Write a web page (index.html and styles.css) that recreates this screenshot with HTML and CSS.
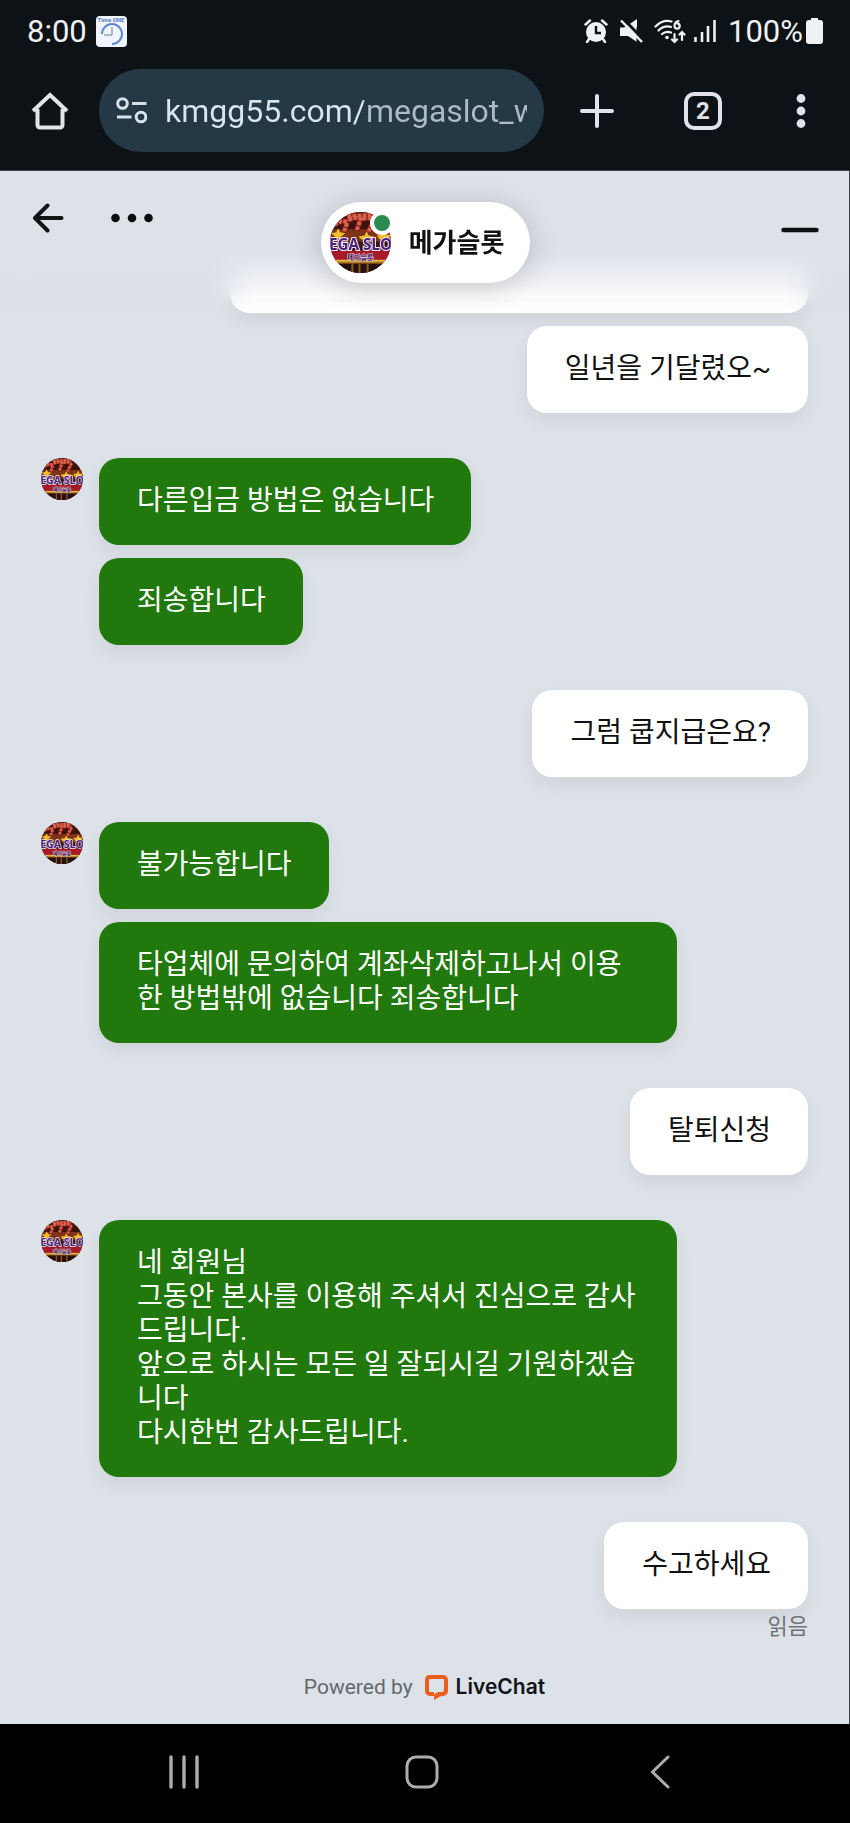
FILE: index.html
```
<!DOCTYPE html>
<html lang="ko">
<head>
    <meta charset="UTF-8">
    <meta name="viewport" content="width=device-width, initial-scale=1.0">
    <title>메가슬롯</title>
    <link rel="stylesheet" href="styles.css">
</head>
<body>

<!-- Shared agent picture -->
<svg class="defs" aria-hidden="true">
    <defs>
        <linearGradient id="gold" x1="0" y1="0" x2="0" y2="1">
            <stop offset="0" stop-color="#f6d24a"/>
            <stop offset="1" stop-color="#8a4a10"/>
        </linearGradient>
        <clipPath id="round"><circle cx="30" cy="30" r="30"/></clipPath>
    </defs>
    <symbol id="agent" viewBox="0 0 60 60">
        <g clip-path="url(#round)">
            <rect width="60" height="60" fill="#3a1410"/>
            <path d="M0 17h60v12H0z" fill="#7d3418"/>
            <path d="M4 13q7-6 13-3l-3 9M18 8q7-4 12-1l-4 12M32 7q8-3 11 2l-5 10M17 4l26-1" fill="none" stroke="#6b150d" stroke-width="6"/>
            <path d="M4 13q7-6 13-3l-3 9M18 8q7-4 12-1l-4 12M32 7q8-3 11 2l-5 10M17 4l26-1" fill="none" stroke="#d9604c" stroke-width="4" stroke-dasharray="4 1"/>
            <path d="M8 16l2 4 5 1-4 3 1 4-4-2-4 2 1-4-4-3 5-1zM36 19l2 4 5 1-4 3H31l-3-3 6-1zM53 18l2 4 5 1-4 4H49l-3-4 5-1z" fill="#f0bc2b"/>
            <rect y="38" width="60" height="10" fill="#a71929"/>
            <rect y="47" width="60" height="4" fill="url(#gold)"/>
            <rect y="51" width="60" height="9" fill="#24110f"/>
            <path d="M22 51v9M29 51v9M37 51v9" stroke="#8f541f" stroke-width="2"/>
            <text class="logo-title" x="30" y="37" text-anchor="middle">EGA SLO</text>
            <text class="logo-sub" x="30" y="47" text-anchor="middle">메가슬롯</text>
        </g>
    </symbol>
</svg>

<div class="status-bar">
    <div class="status-left">
        <span>8:00</span>
        <svg width="31" height="31" viewBox="0 0 31 31" aria-hidden="true">
            <rect width="31" height="31" rx="4" fill="#f0f4fb"/>
            <text class="app-label" x="15" y="6" text-anchor="middle">Time ONE</text>
            <path d="M6 18a10 10 0 1 1 10 10" fill="none" stroke="#6288d2" stroke-width="2"/>
            <path d="M16 11v8H8" fill="none" stroke="#777f8c" stroke-width="1"/>
        </svg>
    </div>
    <div class="status-right">
        <svg width="24" height="24" viewBox="0 0 24 24" aria-hidden="true">
            <path d="M1.500 5.500L6 1.500M22.500 5.500L18 1.500M5 20l-2 3M19 20l2 3" stroke="#f0f1f3" stroke-width="2.500" stroke-linecap="round"/>
            <circle cx="12" cy="13" r="10" fill="#f0f1f3"/>
            <path d="M12 7v7h5" fill="none" stroke="#0d1217" stroke-width="2.400"/>
        </svg>
        <svg width="24" height="24" viewBox="0 0 24 24" aria-hidden="true">
            <path d="M1 8.500h4l5-3 8-5.500v23l-9-6H1z" fill="#f0f1f3"/>
            <path d="M4.500 0l21 22" stroke="#0d1217" stroke-width="3"/>
            <path d="M19 8v15" stroke="#0d1217" stroke-width="3"/>
            <path d="M2 1.500l21 21.500" stroke="#f0f1f3" stroke-width="2.500"/>
        </svg>
        <svg class="wifi" width="32" height="25" viewBox="0 0 32 25" aria-hidden="true">
            <g fill="none" stroke="#f0f1f3" stroke-width="2.200" stroke-linecap="round">
                <path d="M1.500 7.500Q9 0 17.500 2.500M4.500 11.500Q10 6 17 8M8 15q4-3.500 9-1.500"/>
                <path d="M24.500 2q-4 1-4 5a2.600 2.600 0 1 0 2.600-2.600"/>
                <path d="M20.500 15v8M18 20.500l2.500 2.500 2.500-2.500M28 21v-8M25.500 15.500L28 13l2.500 2.500"/>
            </g>
            <circle cx="13" cy="18.500" r="1.800" fill="#f0f1f3"/>
        </svg>
        <svg width="22" height="24" viewBox="0 0 22 24" aria-hidden="true">
            <path d="M1.500 18v5M8 13v10M14 7v16M20.500 1v22" stroke="#f0f1f3" stroke-width="2.600"/>
        </svg>
        <span class="percent">100%</span>
        <svg width="17" height="26" viewBox="0 0 17 26" aria-hidden="true">
            <path d="M5 0h7v2h2a3 3 0 0 1 3 3v18a3 3 0 0 1-3 3H3a3 3 0 0 1-3-3V5a3 3 0 0 1 3-3h2z" fill="#f0f1f3"/>
        </svg>
    </div>
</div>

<div class="toolbar">
    <button class="icon-btn" aria-label="Home">
        <svg width="38" height="38" viewBox="0 0 38 38">
            <path d="M2 19L19 3l17 16M6.500 17v16a2.500 2.500 0 0 0 2.500 2.500h20a2.500 2.500 0 0 0 2.500-2.500V17" fill="none" stroke="#e2e4e8" stroke-width="4"/>
        </svg>
    </button>
    <div class="address">
        <svg width="31" height="27" viewBox="0 0 31 27" aria-hidden="true">
            <g fill="none" stroke="#d5e2ea" stroke-width="3">
                <circle cx="6.500" cy="6.500" r="4.800"/>
                <path d="M16 6.500h14.500M1 20h14.500"/>
                <circle cx="25" cy="20" r="4.800"/>
            </g>
        </svg>
        <input class="url" type="text" aria-label="Address" value="kmgg55.com/megaslot_widget">
    </div>
    <div class="toolbar-actions">
        <button class="icon-btn" aria-label="New tab">
            <svg width="34" height="34" viewBox="0 0 34 34">
                <path d="M17 2v30M2 17h30" stroke="#e2e2ea" stroke-width="4" stroke-linecap="round"/>
            </svg>
        </button>
        <button class="tabs-btn" aria-label="Tabs">2</button>
        <button class="icon-btn" aria-label="More">
            <svg width="18" height="34" viewBox="0 0 18 34">
                <g fill="#e2e2ea"><circle cx="9" cy="4.500" r="4.400"/><circle cx="9" cy="17" r="4.400"/><circle cx="9" cy="29.500" r="4.400"/></g>
            </svg>
        </button>
    </div>
</div>

<main class="chat">
    <header class="chat-header">
        <div class="header-left">
            <button class="icon-btn" aria-label="Back">
                <svg width="32" height="30" viewBox="0 0 32 30">
                    <path d="M29.500 15H3M15.500 2.500L3 15l12.500 12.500" fill="none" stroke="#111518" stroke-width="4" stroke-linecap="round" stroke-linejoin="round"/>
                </svg>
            </button>
            <button class="icon-btn" aria-label="Menu">
                <svg width="42" height="10" viewBox="0 0 42 10">
                    <g fill="#0b0e11"><circle cx="4.500" cy="5" r="4.300"/><circle cx="21" cy="5" r="4.300"/><circle cx="37.500" cy="5" r="4.300"/></g>
                </svg>
            </button>
        </div>
        <div class="agent-pill">
            <div class="agent-photo">
                <svg width="61" height="61"><use href="#agent"/></svg>
                <span class="online"></span>
            </div>
            <span class="agent-name">메가슬롯</span>
        </div>
        <button class="icon-btn minimize" aria-label="Minimize">
            <svg width="38" height="6" viewBox="0 0 38 6">
                <path d="M2.500 3h33" stroke="#0b0e11" stroke-width="4.400" stroke-linecap="round"/>
            </svg>
        </button>
    </header>

    <div class="messages">
        <div class="group customer">
            <div class="bubble scrolled"></div>
            <div class="bubble">일년을 기달렸오~</div>
        </div>

        <div class="group agent">
            <svg class="avatar" width="42" height="42"><use href="#agent"/></svg>
            <div class="bubbles">
                <div class="bubble">다른입금 방법은 없습니다</div>
                <div class="bubble">죄송합니다</div>
            </div>
        </div>

        <div class="group customer">
            <div class="bubble">그럼 쿱지급은요?</div>
        </div>

        <div class="group agent">
            <svg class="avatar" width="42" height="42"><use href="#agent"/></svg>
            <div class="bubbles">
                <div class="bubble">불가능합니다</div>
                <div class="bubble">타업체에 문의하여 계좌삭제하고나서 이용한 방법밖에 없습니다 죄송합니다</div>
            </div>
        </div>

        <div class="group customer">
            <div class="bubble">탈퇴신청</div>
        </div>

        <div class="group agent">
            <svg class="avatar" width="42" height="42"><use href="#agent"/></svg>
            <div class="bubbles">
                <div class="bubble">네 회원님<br>그동안 본사를 이용해 주셔서 진심으로 감사드립니다.<br>앞으로 하시는 모든 일 잘되시길 기원하겠습니다<br>다시한번 감사드립니다.</div>
            </div>
        </div>

        <div class="group customer">
            <div class="bubble">수고하세요</div>
        </div>
        <div class="receipt">읽음</div>
    </div>

    <footer class="powered">
        <span>Powered by</span>
        <a class="brand" href="#">
            <svg width="25" height="26" viewBox="0 0 25 26" aria-hidden="true">
                <path fill-rule="evenodd" d="M5 1h14a5 5 0 0 1 5 5v11a5 5 0 0 1-5 5l-3 .5-6 3.500V22H6a5 5 0 0 1-5-5V6a5 5 0 0 1 4-5zM6 5a1 1 0 0 0-1 1v11a1 1 0 0 0 1 1h4v3q2-3 5-3h3q2 0 2-2V6a1 1 0 0 0-1-1z" fill="#eb5f1c"/>
            </svg>
            <span>LiveChat</span>
        </a>
    </footer>
</main>

<nav class="nav-bar">
    <button class="icon-btn" aria-label="Recents">
        <svg width="30" height="34" viewBox="0 0 30 34">
            <path d="M2 2v30M15 2v30M28 2v30" stroke="#aeacae" stroke-width="3.400" stroke-linecap="round"/>
        </svg>
    </button>
    <button class="icon-btn" aria-label="Home screen">
        <svg width="34" height="34" viewBox="0 0 34 34">
            <rect x="2" y="2" width="30" height="30" rx="9" fill="none" stroke="#aeacae" stroke-width="3"/>
        </svg>
    </button>
    <button class="icon-btn" aria-label="Go back">
        <svg width="20" height="34" viewBox="0 0 20 34">
            <path d="M18 2L2.500 17 18 32" fill="none" stroke="#aeacae" stroke-width="3" stroke-linecap="round"/>
        </svg>
    </button>
</nav>

</body>
</html>
```

FILE: styles.css
```
* {
    box-sizing: border-box;
}

body {
    margin: 0;
    min-height: 100vh;
    display: flex;
    flex-direction: column;
    background: #0d1217;
    font-family: Roboto, "Noto Sans CJK KR", sans-serif;
}

svg {
    display: block;
    flex: none;
}

button {
    padding: 0;
    border: 0;
    background: none;
    font-family: inherit;
    cursor: pointer;
}

.defs {
    position: absolute;
    width: 0;
    height: 0;
}

.icon-btn {
    display: flex;
    align-items: center;
    justify-content: center;
}

/* Phone status bar */
.status-bar {
    display: flex;
    justify-content: space-between;
    align-items: center;
    height: 62px;
    padding: 0 27px;
    color: #f0f1f3;
    font-size: 31px;
}

.status-left,
.status-right {
    display: flex;
    align-items: center;
}

.status-left {
    gap: 9px;
}

.status-right {
    gap: 11px;
}

.status-right .percent {
    margin: 0 -8px 0 1px;
}

.status-right .wifi {
    margin-right: -3px;
}

.app-label {
    font-size: 6px;
    font-weight: bold;
    fill: #5a7fc4;
}

/* Browser toolbar */
.toolbar {
    display: flex;
    align-items: center;
    height: 109px;
    padding: 7px 40px 18px 31px;
    border-bottom: 1px solid #3a4045;
}

.address {
    display: flex;
    flex: 1;
    align-items: center;
    gap: 18px;
    min-width: 0;
    height: 83px;
    margin: 0 36px 0 30px;
    padding: 0 17px;
    border-radius: 42px;
    background: #243945;
}

.url {
    flex: 1;
    min-width: 0;
    height: 48px;
    padding: 0;
    border: 0;
    outline: none;
    font-family: inherit;
    font-size: 32px;
    /* host is brighter than the path */
    color: transparent;
    background: linear-gradient(90deg, #d9e6ee 198px, #a9bcc8 198px);
    -webkit-background-clip: text;
    background-clip: text;
}

.toolbar-actions {
    display: flex;
    align-items: center;
    gap: 70px;
}

.tabs-btn {
    width: 38px;
    height: 38px;
    border: 4px solid #e2e2ea;
    border-radius: 10px;
    color: #e2e2ea;
    font-size: 24px;
    font-weight: bold;
    line-height: 30px;
}

/* Chat window */
.chat {
    position: relative;
    flex: 1;
    display: flex;
    flex-direction: column;
    border-right: 1px solid #3a4148;
    background: #dde1e8;
}

.chat-header {
    position: absolute;
    top: 0;
    left: 0;
    right: 0;
    display: grid;
    grid-template-columns: 1fr auto 1fr;
    align-items: start;
    height: 143px;
    padding: 31px 30px 0 32px;
}

.chat-header::before {
    content: "";
    position: absolute;
    inset: 0;
    background: linear-gradient(#dde1e8 56%, rgba(221, 225, 232, 0.2) 88%);
    backdrop-filter: blur(12px);
    -webkit-mask-image: linear-gradient(#000 80%, transparent);
    mask-image: linear-gradient(#000 80%, transparent);
}

.header-left,
.agent-pill,
.minimize {
    position: relative;
}

.header-left {
    display: flex;
    align-items: center;
    gap: 47px;
    height: 32px;
}

.agent-pill {
    display: flex;
    align-items: center;
    gap: 18px;
    height: 81px;
    padding: 0 26px 0 9px;
    border-radius: 41px;
    background: #fff;
    box-shadow: 0 4px 28px rgba(0, 0, 0, 0.18);
}

.agent-photo {
    position: relative;
}

.online {
    position: absolute;
    top: -1px;
    right: -3px;
    width: 24px;
    height: 24px;
    border: 4px solid #fff;
    border-radius: 50%;
    background: #2a8a50;
}

.agent-name {
    font-size: 26px;
    font-weight: bold;
    line-height: 34px;
    color: #111;
}

.minimize {
    justify-self: end;
    height: 56px;
}

.logo-title {
    font-family: "Open Sans", sans-serif;
    font-size: 15px;
    font-weight: bold;
    fill: #4a2378;
    stroke: #f4e6f2;
    stroke-width: 2px;
    paint-order: stroke;
}

.logo-sub {
    font-size: 7px;
    font-weight: bold;
    fill: #3b1458;
    stroke: #e8cfd8;
    stroke-width: 1px;
    paint-order: stroke;
}

/* Message list */
.messages {
    display: flex;
    flex-direction: column;
    gap: 45px;
    padding: 55px 41px 0 41px;
}

.group {
    display: flex;
}

.customer {
    flex-direction: column;
    align-items: flex-end;
    gap: 13px;
}

.agent {
    align-items: flex-start;
    gap: 16px;
}

.bubbles {
    display: flex;
    flex-direction: column;
    align-items: flex-start;
    gap: 13px;
}

.bubble {
    max-width: 68vw;
    min-height: 87px;
    padding: 26px 37px 27px 38px;
    border-radius: 20px;
    font-size: 28px;
    line-height: 34px;
    box-shadow: 0 8px 16px rgba(60, 80, 70, 0.08);
}

.scrolled {
    width: 68vw;
}

.customer .bubble {
    background: #fff;
    color: #111;
}

.agent .bubble {
    background: #21780d;
    color: #fff;
}

.receipt {
    margin-top: -40px;
    text-align: right;
    font-size: 22px;
    line-height: 26px;
    color: #707478;
}

.powered {
    display: flex;
    justify-content: center;
    align-items: center;
    gap: 11px;
    margin-top: auto;
    padding: 24px 0;
    font-size: 21px;
    line-height: 26px;
    color: #64686c;
}

.brand {
    display: flex;
    align-items: center;
    gap: 7px;
    color: #111518;
    font-family: Inter, sans-serif;
    font-size: 21px;
    font-weight: 600;
    text-decoration: none;
}

/* Android navigation */
.nav-bar {
    display: grid;
    grid-template-columns: repeat(3, 28%);
    justify-content: center;
    align-items: center;
    gap: 2px;
    height: 99px;
    padding: 0 6px 4px 0;
    background: #000;
}
```
